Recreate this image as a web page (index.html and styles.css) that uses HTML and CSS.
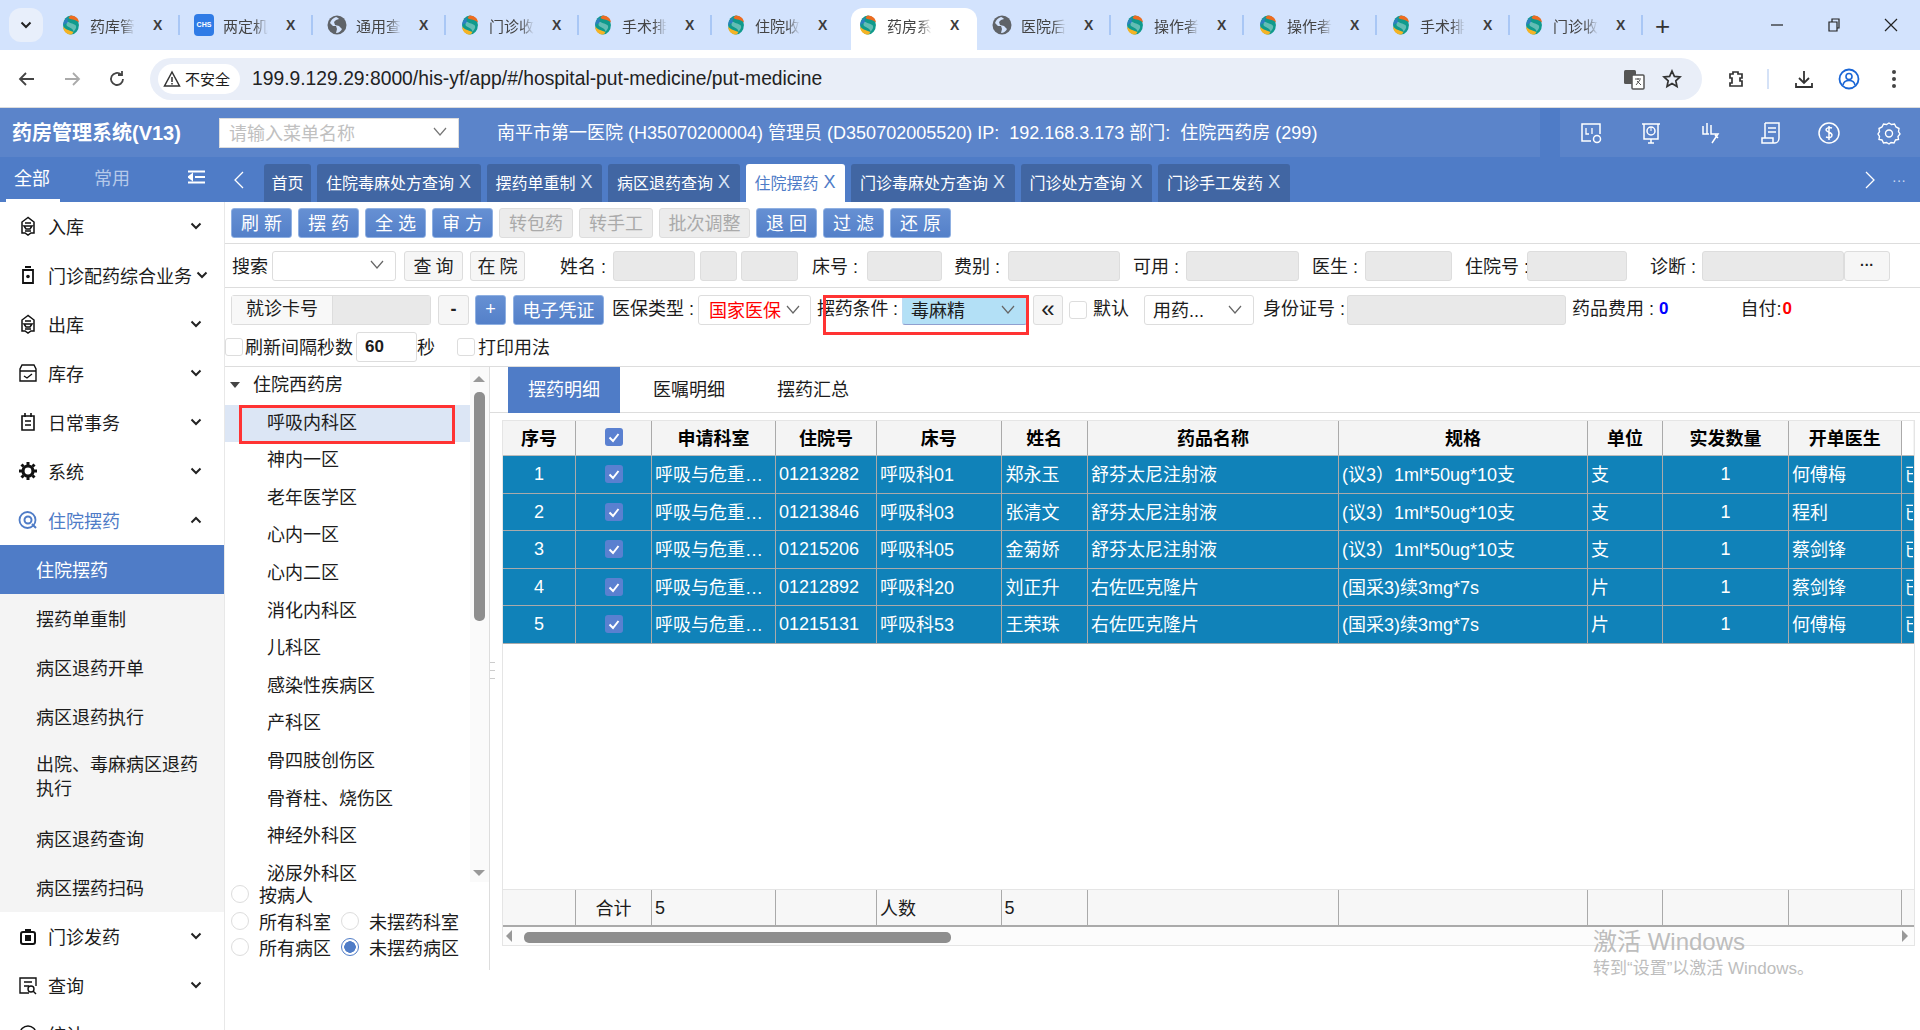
FILE: index.html
```html
<!DOCTYPE html>
<html lang="zh-CN">
<head>
<meta charset="utf-8">
<title>药房管理系统</title>
<link rel="stylesheet" href="styles.css">
</head>
<body>
<svg class="defs" aria-hidden="true">
  <symbol id="fav" viewBox="0 0 20 24">
    <ellipse cx="10" cy="12" rx="9.5" ry="11.5" fill="#0f9a8c"/>
    <path d="M10 .5C15 .5 19.5 4 19.5 9 16 5 11 6 7 3.5 8 1.5 9 .5 10 .5Z" fill="#ee6b1f"/>
    <path d="M.8 14C4 18 9 18 13 20.5 12 22.5 11 23.5 10 23.5 5 23.5.5 19.5.8 14Z" fill="#f5b324"/>
    <path d="M7 3.5C3 4 .5 8 .6 13 3 10 5 10 7 9 5.5 7 5.5 5 7 3.5Z" fill="#2c7fc0"/>
    <path d="M6.500 8C9 10 14 10 16 13 17 15 15 18 13 20 13 17 8 15 5 13 4 11 5 9 6.500 8Z" fill="#fff" opacity=".35"/>
  </symbol>
  <symbol id="globe" viewBox="0 0 20 20">
    <circle cx="10" cy="10" r="9.500" fill="#5f6368"/>
    <path d="M9 2C6 3 4 5 3 8l3 3 3 0 1 3-1 4c3 0 5-2 6-4l-3-3-4-1-1-3 2-2 3-1C11 3 10 2 9 2Z" fill="#d3e3fd"/>
  </symbol>
  <symbol id="v" viewBox="0 0 14 9"><path d="M1 1l6 7 6-7" fill="none" stroke="currentColor" stroke-width="1.200"/></symbol>
  <symbol id="chev" viewBox="0 0 12 8"><path d="M1.500 1.500 6 6l4.500-4.500" fill="none" stroke="currentColor" stroke-width="2"/></symbol>
  <symbol id="check" viewBox="0 0 18 18"><rect width="18" height="18" rx="3" fill="#5a80d0"/><path d="M4.500 9.500 8 13l5.500-7" fill="none" stroke="#fff" stroke-width="2"/></symbol>
  <symbol id="house" viewBox="0 0 20 20"><path d="M10 1.500 4 6v11h3l3 2 3-2h3V6ZM7 7h6M6 10h8l-2 3H8ZM7 15h6" fill="none" stroke="#111" stroke-width="1.500"/></symbol>
</svg>

<header class="chrome">
  <div class="tabstrip">
    <div class="tabmenu"><svg class="ic12"><use href="#chev"/></svg></div>
    <div class="btab"><svg class="favi"><use href="#fav"/></svg><span class="btitle">药库管</span><span class="bx">X</span></div>
    <div class="btab"><span class="chs">CHS</span><span class="btitle">两定机</span><span class="bx">X</span></div>
    <div class="btab"><svg class="favi"><use href="#globe"/></svg><span class="btitle">通用查</span><span class="bx">X</span></div>
    <div class="btab"><svg class="favi"><use href="#fav"/></svg><span class="btitle">门诊收</span><span class="bx">X</span></div>
    <div class="btab"><svg class="favi"><use href="#fav"/></svg><span class="btitle">手术排</span><span class="bx">X</span></div>
    <div class="btab nosep"><svg class="favi"><use href="#fav"/></svg><span class="btitle">住院收</span><span class="bx">X</span></div>
    <div class="btab active nosep"><svg class="favi"><use href="#fav"/></svg><span class="btitle">药房系</span><span class="bx">X</span></div>
    <div class="btab"><svg class="favi"><use href="#globe"/></svg><span class="btitle">医院后</span><span class="bx">X</span></div>
    <div class="btab"><svg class="favi"><use href="#fav"/></svg><span class="btitle">操作者</span><span class="bx">X</span></div>
    <div class="btab"><svg class="favi"><use href="#fav"/></svg><span class="btitle">操作者</span><span class="bx">X</span></div>
    <div class="btab"><svg class="favi"><use href="#fav"/></svg><span class="btitle">手术排</span><span class="bx">X</span></div>
    <div class="btab"><svg class="favi"><use href="#fav"/></svg><span class="btitle">门诊收</span><span class="bx">X</span></div>
    <span class="newtab">+</span>
    <div class="winbtns">
      <svg class="wb" viewBox="0 0 16 16"><path d="M2 8h12" stroke="#222" stroke-width="1.200"/></svg>
      <svg class="wb" viewBox="0 0 16 16"><path d="M3 5h8v9H3ZM6 5V2h7v9h-2" fill="none" stroke="#222" stroke-width="1.200"/></svg>
      <svg class="wb" viewBox="0 0 16 16"><path d="M2 2l12 12M14 2 2 14" stroke="#222" stroke-width="1.200"/></svg>
    </div>
  </div>
  <div class="addrbar">
    <svg class="nav1" viewBox="0 0 20 20"><path d="M17 10H4M9 4l-6 6 6 6" fill="none" stroke="#444" stroke-width="1.800"/></svg>
    <svg class="nav1" viewBox="0 0 20 20"><path d="M3 10h13M11 4l6 6-6 6" fill="none" stroke="#aaa" stroke-width="1.800"/></svg>
    <svg class="nav1" viewBox="0 0 20 20"><path d="M16 10a6 6 0 1 1-2-4.500M15 2v4h-4" fill="none" stroke="#444" stroke-width="1.800"/></svg>
    <div class="omni">
      <div class="secchip">
        <svg class="warn" viewBox="0 0 18 18"><path d="M9 2 1.500 16h15ZM9 7v5M9 13v1.500" fill="none" stroke="#333" stroke-width="1.500"/></svg>
        <span>不安全</span>
      </div>
      <span class="url">199.9.129.29:8000/his-yf/app/#/hospital-put-medicine/put-medicine</span>
      <svg class="omni-i tr" viewBox="0 0 22 22"><rect x="1" y="2" width="12" height="14" rx="1.500" fill="#555"/><rect x="9" y="7" width="12" height="14" rx="1" fill="#fff" stroke="#555" stroke-width="1.500"/><path d="M12 11h6M15 10v2M13 17l4-5M14 13l4 4" stroke="#555"/></svg>
      <svg class="omni-i st" viewBox="0 0 20 20"><path d="M10 2l2.400 5.400 5.600.6-4.200 3.800 1.200 5.700L10 14.600l-5 2.900 1.200-5.700L2 8l5.600-.6Z" fill="none" stroke="#333" stroke-width="1.700"/></svg>
    </div>
    <svg class="tool t-ext" viewBox="0 0 20 20"><path d="M4 5h3V3h5v2h4v4h-2v3h2v5H4v-3h2V9H4Z" fill="none" stroke="#333" stroke-width="1.700"/></svg>
    <span class="toolsep"></span>
    <svg class="tool t-dl" viewBox="0 0 20 20"><path d="M10 2v11M5 9l5 5 5-5M2 14v4h16v-4" fill="none" stroke="#333" stroke-width="1.800"/></svg>
    <svg class="tool t-pr" viewBox="0 0 22 22"><circle cx="11" cy="11" r="9.500" fill="none" stroke="#1a66d6" stroke-width="1.800"/><circle cx="11" cy="8.500" r="3" fill="none" stroke="#1a66d6" stroke-width="1.600"/><path d="M5 17c1-6 11-6 12 0" fill="none" stroke="#1a66d6" stroke-width="1.600"/></svg>
    <svg class="tool t-dots" viewBox="0 0 6 20"><circle cx="3" cy="3" r="2" fill="#444"/><circle cx="3" cy="10" r="2" fill="#444"/><circle cx="3" cy="17" r="2" fill="#444"/></svg>
  </div>
</header>

<div class="hdr">
  <div class="brand">药房管理系统(V13)</div>
  <div class="menusearch"><span>请输入菜单名称</span><svg class="vv"><use href="#v"/></svg></div>
  <div class="info">南平市第一医院 (H35070200004) 管理员 (D350702005520) IP:&nbsp; 192.168.3.173 部门:&nbsp; 住院西药房 (299)</div>
  <div class="notch"></div>
  <div class="hicons">
    <svg class="hi" viewBox="0 0 24 24"><path d="M12 20H3V3h18v10" fill="none" stroke="#fff" stroke-width="1.500"/><circle cx="18" cy="18" r="3.500" fill="none" stroke="#fff" stroke-width="1.500"/><path d="M7 7v6h3M13 7v6" fill="none" stroke="#fff" stroke-width="1.300"/></svg>
    <svg class="hi" viewBox="0 0 24 24"><path d="M3 3h18M5 3v15h14V3M12 18v4M9 22h6" fill="none" stroke="#fff" stroke-width="1.500"/><circle cx="12" cy="10" r="4" fill="none" stroke="#fff" stroke-width="1.500"/><path d="M12 10V6" stroke="#fff"/></svg>
    <svg class="hi" viewBox="0 0 24 24"><path d="M5 5v8h6M9 2v11M13 4v9h7l-6 9M17 14l3 3" fill="none" stroke="#fff" stroke-width="1.500"/></svg>
    <svg class="hi" viewBox="0 0 24 24"><path d="M7 2h14v15c0 3-2 5-4 5H4v-5h11v5M7 17V2M10 7h8M10 11h8" fill="none" stroke="#fff" stroke-width="1.500"/></svg>
    <svg class="hi" viewBox="0 0 24 24"><circle cx="12" cy="12" r="10" fill="none" stroke="#fff" stroke-width="1.500"/><path d="M15 7c-3-1-6 0-6 2s6 2 6 5-3 3-6 2M12 5v14" fill="none" stroke="#fff" stroke-width="1.500"/></svg>
    <svg class="hi" viewBox="0 0 24 24"><path d="M12 2l2.500 1.500 3-.5 1.500 3 3 1.500-.5 3L23 13l-2 2.500.5 3-3 .5-1.500 3-3-.5L12 23l-2.500-1.500-3 .5L5 19l-3-.5.5-3L1 13l1.500-2.500-.5-3L5 6l1.500-3 3 .5Z" fill="none" stroke="#fff" stroke-width="1.400"/><circle cx="12" cy="12.500" r="3.500" fill="none" stroke="#fff" stroke-width="1.400"/></svg>
  </div>
</div>

<div class="navrow">
  <div class="navside">
    <span class="ns-a">全部</span>
    <span class="ns-b">常用</span>
    <svg class="ns-c" viewBox="0 0 18 14"><path d="M0 1.500h17M7 7h10M0 12.500h17M4 4.500 .5 7 4 9.500Z" stroke="#fff" stroke-width="2" fill="#fff"/></svg>
  </div>
  <svg class="pg pg-l" viewBox="0 0 12 20"><path d="M10 2 2 10l8 8" fill="none" stroke="#fff" stroke-width="1.300"/></svg>
  <div class="ptab plain">首页</div>
  <div class="ptab">住院毒麻处方查询<i>X</i></div>
  <div class="ptab">摆药单重制<i>X</i></div>
  <div class="ptab">病区退药查询<i>X</i></div>
  <div class="ptab on">住院摆药<i>X</i></div>
  <div class="ptab">门诊毒麻处方查询<i>X</i></div>
  <div class="ptab">门诊处方查询<i>X</i></div>
  <div class="ptab">门诊手工发药<i>X</i></div>
  <svg class="pg pg-r" viewBox="0 0 12 20"><path d="M2 2l8 8-8 8" fill="none" stroke="#fff" stroke-width="1.300"/></svg>
  <span class="pgmore">···</span>
</div>

<div class="main">
  <aside class="side">
    <div class="mi"><svg class="mico"><use href="#house"/></svg><span>入库</span><svg class="chv"><use href="#chev"/></svg></div>
    <div class="mi"><svg class="mico" viewBox="0 0 20 20"><path d="M7 2h6M5 5h10v13H5Z" fill="none" stroke="#111" stroke-width="1.800"/><circle cx="10" cy="11.500" r="1.800" fill="#111"/></svg><span class="long">门诊配药综合业务</span><svg class="chv"><use href="#chev"/></svg></div>
    <div class="mi"><svg class="mico"><use href="#house"/></svg><span>出库</span><svg class="chv"><use href="#chev"/></svg></div>
    <div class="mi"><svg class="mico" viewBox="0 0 20 20"><path d="M4 2h12l2 4v12H2V6ZM2 8h16M6 13l3 2 5-4" fill="none" stroke="#111" stroke-width="1.400"/></svg><span>库存</span><svg class="chv"><use href="#chev"/></svg></div>
    <div class="mi"><svg class="mico" viewBox="0 0 20 20"><path d="M4 4h12v14H4ZM7 1v4M13 1v4M7 9h6M7 13h6" fill="none" stroke="#111" stroke-width="1.600"/></svg><span>日常事务</span><svg class="chv"><use href="#chev"/></svg></div>
    <div class="mi"><svg class="mico" viewBox="0 0 20 20"><circle cx="10" cy="10" r="5" fill="none" stroke="#111" stroke-width="3.200"/><path d="M10 1v3M10 16v3M1 10h3M16 10h3M3.500 3.500l2 2M14.500 14.500l2 2M16.500 3.500l-2 2M5.500 14.500l-2 2" stroke="#111" stroke-width="3"/></svg><span>系统</span><svg class="chv"><use href="#chev"/></svg></div>
    <div class="mi cur"><svg class="mico" viewBox="0 0 20 20"><circle cx="9.500" cy="10" r="8" fill="none" stroke="#4f7cc7" stroke-width="1.800"/><circle cx="10" cy="10" r="3.500" fill="none" stroke="#4f7cc7" stroke-width="2"/><path d="M14 14l4 4" stroke="#4f7cc7" stroke-width="2"/></svg><span>住院摆药</span><svg class="chv up"><use href="#chev"/></svg></div>
    <div class="sub">
      <div class="si act">住院摆药</div>
      <div class="si">摆药单重制</div>
      <div class="si">病区退药开单</div>
      <div class="si">病区退药执行</div>
      <div class="si multi">出院、毒麻病区退药执行</div>
      <div class="si">病区退药查询</div>
      <div class="si">病区摆药扫码</div>
    </div>
    <div class="mi"><svg class="mico" viewBox="0 0 20 20"><rect x="3" y="6" width="14" height="12" rx="2" fill="none" stroke="#111" stroke-width="2"/><path d="M7 3h6v3H7Z" fill="#111"/><rect x="7" y="9" width="6" height="6" fill="#111"/></svg><span>门诊发药</span><svg class="chv"><use href="#chev"/></svg></div>
    <div class="mi"><svg class="mico" viewBox="0 0 20 20"><path d="M18 11V3H2v15h9M6 7h8M6 11h5" fill="none" stroke="#111" stroke-width="1.400"/><circle cx="13" cy="14" r="3" fill="none" stroke="#111" stroke-width="1.400"/><path d="M15 16l3 3" stroke="#111" stroke-width="1.400"/></svg><span>查询</span><svg class="chv"><use href="#chev"/></svg></div>
    <div class="mi"><svg class="mico" viewBox="0 0 20 20"><circle cx="10" cy="10" r="8" fill="none" stroke="#111" stroke-width="1.500"/></svg><span>统计</span><svg class="chv"><use href="#chev"/></svg></div>
  </aside>

  <section class="content">
    <div class="actions">
      <button class="btn pri b2">刷新</button>
      <button class="btn pri b2">摆药</button>
      <button class="btn pri b2">全选</button>
      <button class="btn pri b2">审方</button>
      <button class="btn dis b3">转包药</button>
      <button class="btn dis b3">转手工</button>
      <button class="btn dis b4">批次调整</button>
      <button class="btn pri b2">退回</button>
      <button class="btn pri b2">过滤</button>
      <button class="btn pri b2">还原</button>
    </div>

    <div class="frow f1">
      <label class="lb w40">搜索</label>
      <div class="sel w124"><svg class="vv"><use href="#v"/></svg></div>
      <button class="btn plainb w59 ml8 sp">查询</button>
      <button class="btn plainb w55 ml7 sp">在院</button>
      <label class="lb w53 ml35">姓名 :</label>
      <div class="inp w82"></div>
      <div class="inp w37 ml5"></div>
      <div class="inp w57 ml4"></div>
      <label class="lb w55 ml14">床号 :</label>
      <div class="inp w75"></div>
      <label class="lb w54 ml12">费别 :</label>
      <div class="inp w112"></div>
      <label class="lb w53 ml13">可用 :</label>
      <div class="inp w113"></div>
      <label class="lb w53 ml13">医生 :</label>
      <div class="inp w87"></div>
      <label class="lb w62 ml13">住院号 :</label>
      <div class="inp w100"></div>
      <label class="lb w52 ml23">诊断 :</label>
      <div class="inp w142"></div>
      <button class="btn plainb w46 dots">···</button>
    </div>

    <div class="frow f2">
      <div class="cardgrp"><span class="cardlb">就诊卡号</span><span class="cardin"></span></div>
      <button class="btn light w31 ml7">-</button>
      <button class="btn pri w31 ml6">+</button>
      <button class="btn pri w91 ml7">电子凭证</button>
      <label class="lb w86 ml8">医保类型 :</label>
      <div class="sel w113 red">国家医保<svg class="vv"><use href="#v"/></svg></div>
      <label class="lb w85 ml6 tight">摆药条件 :</label>
      <div class="sel w125 hi-sel">毒麻精<svg class="vv"><use href="#v"/></svg></div>
      <button class="btn plainb w30 ml6 dbl">«</button>
      <span class="cb ml6"></span>
      <label class="lb w51 ml6">默认</label>
      <div class="sel w110 tight-sel">用药...<svg class="vv"><use href="#v"/></svg></div>
      <label class="lb w84 ml9">身份证号 :</label>
      <div class="inp w219"></div>
      <label class="lb w87 ml6">药品费用 :</label>
      <b class="num blue">0</b>
      <label class="lb ml72">自付:</label><b class="num redt">0</b>
      <div class="redbox rb-cond"></div>
    </div>

    <div class="frow f3">
      <span class="cb"></span>
      <label class="lb w111 ml2">刷新间隔秒数</label>
      <div class="numin">60</div>
      <label class="lb w40">秒</label>
      <span class="cb cb2"></span>
      <label class="lb ml3">打印用法</label>
    </div>

    <div class="panes">
      <div class="treepane">
        <div class="treewrap">
          <div class="tree">
            <div class="ti top"><span class="tri"></span>住院西药房</div>
            <div class="ti chosen">呼吸内科区<div class="redbox rb-ward"></div></div>
            <div class="ti">神内一区</div>
            <div class="ti">老年医学区</div>
            <div class="ti">心内一区</div>
            <div class="ti">心内二区</div>
            <div class="ti">消化内科区</div>
            <div class="ti">儿科区</div>
            <div class="ti">感染性疾病区</div>
            <div class="ti">产科区</div>
            <div class="ti">骨四肢创伤区</div>
            <div class="ti">骨脊柱、烧伤区</div>
            <div class="ti">神经外科区</div>
            <div class="ti">泌尿外科区</div>
          </div>
          <div class="vbar">
            <span class="ar-up"></span>
            <span class="vthumb"></span>
            <span class="ar-dn"></span>
          </div>
        </div>
        <div class="radios">
          <div class="rrow"><span class="rd"></span><span class="rt">按病人</span></div>
          <div class="rrow"><span class="rd"></span><span class="rt">所有科室</span><span class="rd"></span><span class="rt">未摆药科室</span></div>
          <div class="rrow"><span class="rd"></span><span class="rt">所有病区</span><span class="rd on"></span><span class="rt">未摆药病区</span></div>
        </div>
      </div>
      <div class="rightpane">
        <div class="grip"></div>
        <div class="rtabs">
          <div class="rtab on">摆药明细</div>
          <div class="rtab t2">医嘱明细</div>
          <div class="rtab t3">摆药汇总</div>
        </div>
        <div class="grid">
          <div class="row head">
            <div class="c ctr">序号</div><div class="c ctr"><svg class="ck"><use href="#check"/></svg></div><div class="c ctr">申请科室</div><div class="c ctr">住院号</div><div class="c ctr">床号</div><div class="c ctr">姓名</div><div class="c ctr">药品名称</div><div class="c ctr">规格</div><div class="c ctr">单位</div><div class="c ctr">实发数量</div><div class="c ctr">开单医生</div><div class="c"></div>
          </div>
          <div class="gbody">
            <div class="row rec">
              <div class="c ctr">1</div><div class="c ctr"><svg class="ck"><use href="#check"/></svg></div><div class="c">呼吸与危重…</div><div class="c">01213282</div><div class="c">呼吸科01</div><div class="c">郑永玉</div><div class="c">舒芬太尼注射液</div><div class="c">(议3）1ml*50ug*10支</div><div class="c">支</div><div class="c ctr">1</div><div class="c">何傅梅</div><div class="c">已</div>
            </div>
            <div class="row rec">
              <div class="c ctr">2</div><div class="c ctr"><svg class="ck"><use href="#check"/></svg></div><div class="c">呼吸与危重…</div><div class="c">01213846</div><div class="c">呼吸科03</div><div class="c">张清文</div><div class="c">舒芬太尼注射液</div><div class="c">(议3）1ml*50ug*10支</div><div class="c">支</div><div class="c ctr">1</div><div class="c">程利</div><div class="c">已</div>
            </div>
            <div class="row rec">
              <div class="c ctr">3</div><div class="c ctr"><svg class="ck"><use href="#check"/></svg></div><div class="c">呼吸与危重…</div><div class="c">01215206</div><div class="c">呼吸科05</div><div class="c">金菊娇</div><div class="c">舒芬太尼注射液</div><div class="c">(议3）1ml*50ug*10支</div><div class="c">支</div><div class="c ctr">1</div><div class="c">蔡剑锋</div><div class="c">已</div>
            </div>
            <div class="row rec">
              <div class="c ctr">4</div><div class="c ctr"><svg class="ck"><use href="#check"/></svg></div><div class="c">呼吸与危重…</div><div class="c">01212892</div><div class="c">呼吸科20</div><div class="c">刘正升</div><div class="c">右佐匹克隆片</div><div class="c">(国采3)续3mg*7s</div><div class="c">片</div><div class="c ctr">1</div><div class="c">蔡剑锋</div><div class="c">已</div>
            </div>
            <div class="row rec">
              <div class="c ctr">5</div><div class="c ctr"><svg class="ck"><use href="#check"/></svg></div><div class="c">呼吸与危重…</div><div class="c">01215131</div><div class="c">呼吸科53</div><div class="c">王荣珠</div><div class="c">右佐匹克隆片</div><div class="c">(国采3)续3mg*7s</div><div class="c">片</div><div class="c ctr">1</div><div class="c">何傅梅</div><div class="c">已</div>
            </div>
          </div>
          <div class="row foot">
            <div class="c"></div><div class="c ctr">合计</div><div class="c fnum">5</div><div class="c"></div><div class="c">人数</div><div class="c fnum">5</div><div class="c"></div><div class="c"></div><div class="c"></div><div class="c"></div><div class="c"></div><div class="c"></div>
          </div>
          <div class="hbar"><span class="ar-l"></span><span class="hthumb"></span><span class="ar-r"></span></div>
        </div>
      </div>
    </div>
    <div class="winmark">
      <div class="wm1">激活 Windows</div>
      <div class="wm2">转到“设置”以激活 Windows。</div>
    </div>
  </section>
</div>
</body>
</html>
```
FILE: styles.css
```css
* { box-sizing: border-box; }
html, body { margin: 0; height: 1030px; overflow: hidden; background: #fff; }
body { font-family: "Liberation Sans", "Noto Sans CJK SC", sans-serif; font-size: 18px; color: #1c1c1c; }
.defs { position: absolute; width: 0; height: 0; }
svg { display: block; flex: none; }

/* browser chrome */
.chrome { height: 108px; border-bottom: 1px solid #dcdcdc; }
.tabstrip { height: 50px; background: #d3e3fd; display: flex; align-items: flex-end; position: relative; }
.tabmenu { width: 34px; height: 34px; margin: 0 4px 8px 9px; border-radius: 12px; background: #e8effb; display: flex; align-items: center; justify-content: center; color: #222; }
.ic12 { width: 12px; height: 8px; }
.btab { width: 133px; height: 42px; display: flex; align-items: center; padding: 0 0 8px 14px; position: relative; font-size: 15px; color: #444; flex: none; }
.btab::after { content: ""; position: absolute; right: 0; top: 7px; height: 20px; width: 2px; background: #a9c7f5; }
.btab.nosep::after { display: none; }
.btab.active { background: #fff; border-radius: 12px 12px 0 0; margin: 0 1px 0 6px; width: 126px; z-index: 1; padding-left: 7px; }
.favi { width: 20px; height: 20px; margin-right: 9px; }
.chs { width: 20px; height: 22px; margin-right: 9px; background: #2f7be6; border-radius: 4px; color: #fff; font-size: 7px; font-weight: bold; line-height: 22px; text-align: center; flex: none; }
.btitle { width: 45px; overflow: hidden; white-space: nowrap; -webkit-mask-image: linear-gradient(90deg, #000 70%, transparent); mask-image: linear-gradient(90deg, #000 70%, transparent); }
.bx { margin-left: 18px; font-size: 14px; font-weight: bold; color: #3c3c3c; }
.newtab { margin: 0 0 9px 12px; font-size: 26px; line-height: 30px; color: #333; }
.winbtns { margin-left: auto; display: flex; gap: 41px; padding: 0 21px 17px 0; }
.wb { width: 16px; height: 16px; }

.addrbar { height: 57px; display: flex; align-items: center; padding-left: 17px; background: #fff; }
.nav1 { width: 20px; height: 20px; margin-right: 25px; }
.omni { width: 1552px; height: 42px; margin-left: -2px; border-radius: 21px; background: #e9eef8; display: flex; align-items: center; padding-left: 8px; }
.secchip { height: 30px; width: 82px; border-radius: 15px; background: #fff; display: flex; align-items: center; padding-left: 5px; gap: 4px; font-size: 15px; }
.warn { width: 18px; height: 18px; }
.url { margin-left: 12px; padding-top: 1px; font-size: 19.300px; color: #222; white-space: nowrap; }
.omni-i { margin-left: auto; }
.tr { width: 22px; height: 22px; margin-right: 17px; margin-left: auto; }
.st { width: 20px; height: 20px; margin: 0 20px 0 0; }
.tool { width: 20px; height: 20px; }
.t-ext { margin-left: 24px; }
.toolsep { width: 2px; height: 20px; background: #d5e2f7; margin-left: 21px; }
.t-dl { margin-left: 25px; }
.t-pr { margin-left: 24px; width: 22px; height: 22px; }
.t-dots { margin-left: 31px; width: 6px; }

/* app header */
.hdr { height: 49px; background: #5b84ca; display: flex; align-items: center; color: #fff; }
.brand { width: 219px; padding: 0 0 2px 12px; font-size: 20px; font-weight: bold; white-space: nowrap; }
.menusearch { width: 240px; height: 30px; background: #fff; border: 1px solid #ddd; display: flex; align-items: center; justify-content: space-between; padding: 0 11px 2px 9px; color: #c0c0c0; }
.menusearch .vv { color: #777; }
.vv { width: 14px; height: 9px; color: #666; margin-left: auto; }
.info { margin-left: 38px; padding-bottom: 3px; white-space: nowrap; width: 1043px; }
.notch { width: 20px; height: 49px; background: #4f7cc7; }
.hicons { flex: 1; display: flex; gap: 35.500px; padding-left: 19px; }
.hi { width: 24px; height: 24px; }

.navrow { height: 45px; background: #4f7cc7; display: flex; align-items: flex-end; gap: 6px; position: relative; }
.navside { width: 226px; height: 45px; flex: none; display: flex; align-items: center; padding: 0 0 5px 14px; position: relative; color: #fff; margin-right: -6px; }
.navside::after { content: ""; position: absolute; left: 6px; bottom: 0; width: 54px; height: 3px; background: #fff; }
.ns-b { margin-left: 44px; color: #b5c9ea; }
.ns-c { width: 18px; height: 14px; margin-left: auto; margin-right: 20px; }
.pg { width: 12px; height: 20px; align-self: center; }
.pg-l { margin-left: 7px; margin-right: 0; }
.pg-r { margin-left: auto; }
.pgmore { align-self: center; color: #c9d8f0; font-size: 14px; margin: 0 14px 0 10px; }
.ptab { height: 38px; padding: 0 9px 2px; background: #4166a3; border-radius: 3px 3px 0 0; color: #fff; font-size: 16px; display: flex; align-items: center; gap: 5px; white-space: nowrap; }
.pg-l + .ptab { margin-left: 13px; }
.ptab.plain { padding: 0 7.500px 2px; }
.ptab i { font-style: normal; font-size: 18px; color: #d9e4f5; width: 12.500px; }
.ptab.on { background: #fff; color: #4f7cc7; }
.ptab.on i { color: #4f7cc7; }

/* sidebar */
.main { display: flex; height: 828px; }
.side { width: 225px; flex: none; border-right: 1px solid #e8e8e8; overflow: hidden; }
.mi { height: 49px; display: flex; align-items: center; padding: 0 0 2px 18px; }
.mico { width: 20px; height: 20px; margin-right: 10px; }
.mi .chv { width: 12px; height: 8px; margin-left: auto; margin-right: 22px; color: #222; }
.chv.up { transform: rotate(180deg); }
.long { white-space: nowrap; width: 144px; }
.mi .long + .chv { margin-right: 22px; margin-left: 4px; }
.mi.cur { color: #4f7cc7; }
.sub { background: #f4f4f4; }
.si { height: 49px; padding: 0 10px 2px 36px; display: flex; align-items: center; }
.si.act { background: #4f7cc7; color: #fff; }
.si.multi { height: 73px; line-height: 24px; }

/* content */
.content { flex: 1; min-width: 0; position: relative; }
.actions { height: 42px; padding: 6px 0 0 6px; display: flex; gap: 6px; border-bottom: 1px solid #ddd; }
.btn { height: 30px; border-radius: 3px; font: inherit; padding: 0 0 2px; display: flex; align-items: center; justify-content: center; flex: none; }
.btn.pri { background: linear-gradient(#6690d3, #5480c9); border: 1px solid #8fb0e2; color: #fff; }
.btn.dis { background: #ececec; border: 1px solid #ddd; color: #aaa; }
.btn.plainb { background: #f6f6f6; border: 1px solid #ddd; color: #222; }
.btn.light { background: #f6f6f6; border: 1px solid #ddd; color: #222; font-weight: bold; }
.b2 { width: 61px; letter-spacing: 5px; text-indent: 5px; }
.b3 { width: 74px; }
.b4 { width: 91px; }
.sp { letter-spacing: 4px; text-indent: 4px; }
.dots { color: #444; font-weight: bold; font-size: 14px; }
.dbl { font-size: 24px; font-weight: normal; }

.frow { display: flex; align-items: center; position: relative; }
.f1 { height: 44px; padding-left: 7px; border-bottom: 1px solid #ddd; }
.f1 .lb { padding-bottom: 2px; }
.f2 { height: 41px; padding: 7px 0 0 6px; align-items: flex-start; }
.f2 .lb, .f2 .num { line-height: 28px; }
.f3 { height: 38px; padding-bottom: 2px; border-bottom: 1px solid #ddd; }
.f3 .lb { padding-bottom: 2px; }
.lb { flex: none; white-space: nowrap; }
.tight { letter-spacing: -.2px; }
.inp { height: 30px; background: #e9e9e9; border: 1px solid #ddd; border-radius: 3px; flex: none; }
.sel { height: 30px; background: #fff; border: 1px solid #ddd; border-radius: 3px; display: flex; align-items: center; padding: 0 11px 2px 10px; flex: none; }
.sel.red { color: #f00; padding-right: 10px; }
.tight-sel { padding-left: 8px; }
.hi-sel { background: #b3e0f6; border-color: #bcdcf5; border-bottom-color: #8f9fcf; padding-left: 8px; }
.cardgrp { width: 200px; height: 30px; display: flex; border: 1px solid #ddd; border-radius: 3px; flex: none; }
.cardlb { width: 101px; background: #f8f8f8; text-align: center; line-height: 26px; border-right: 1px solid #ddd; }
.cardin { flex: 1; background: #e9e9e9; }
.cb { width: 18px; height: 18px; border: 1px solid #ddd; border-radius: 3px; flex: none; background: #fff; }
.f2 .cb { margin-top: 6px; }
.cb2 { margin-left: 0; }
.numin { width: 61px; height: 30px; border: 1px solid #ddd; border-radius: 3px; padding-left: 8px; line-height: 27px; font-weight: bold; font-size: 17px; }
.num { font-size: 17px; }
.blue { color: #00f; }
.redt { color: #f00; margin-left: 1px; }
.redbox { position: absolute; border: 3px solid #f33; pointer-events: none; }
.rb-cond { left: 598px; top: 7px; width: 206px; height: 40px; }
.rb-ward { left: 14px; top: 0; width: 216px; height: 39px; }

.w30{width:30px}.w31{width:31px}.w37{width:37px}.w40{width:40px}.w46{width:46px}.w51{width:51px}.w52{width:52px}.w53{width:53px}.w54{width:54px}.w55{width:55px}.w57{width:57px}.w59{width:59px}.w62{width:62px}.w75{width:75px}.w82{width:82px}.w84{width:84px}.w85{width:85px}.w86{width:86px}.w87{width:87px}.w91{width:91px}.w100{width:100px}.w110{width:110px}.w111{width:111px}.w112{width:112px}.w113{width:113px}.w124{width:124px}.w125{width:125px}.w142{width:142px}.w219{width:219px}
.ml2{margin-left:2px}.ml3{margin-left:3px}.ml4{margin-left:4px}.ml5{margin-left:5px}.ml6{margin-left:6px}.ml7{margin-left:7px}.ml8{margin-left:8px}.ml9{margin-left:9px}.ml12{margin-left:12px}.ml13{margin-left:13px}.ml14{margin-left:14px}.ml23{margin-left:23px}.ml35{margin-left:35px}.ml72{margin-left:72px}

/* panes */
.panes { display: flex; height: 603px; }
.treepane { width: 265px; flex: none; border-right: 1px solid #ddd; display: flex; flex-direction: column; }
.treewrap { height: 515px; display: flex; flex: none; }
.tree { width: 245px; flex: none; }
.ti { height: 37.600px; line-height: 37.600px; padding-left: 42px; position: relative; white-space: nowrap; }
.ti.top { padding-left: 28px; }
.tri { display: inline-block; width: 0; height: 0; border: 5px solid transparent; border-top: 6px solid #444; border-bottom: 0; margin: 0 13px 3px -23px; vertical-align: middle; }
.ti.chosen { background: #dce6f5; }
.vbar { width: 19px; background: #fafafa; position: relative; padding: 25px 4px 0; }
.vthumb { display: block; width: 11px; height: 229px; border-radius: 5px; background: #8e8e8e; }
.ar-up, .ar-dn, .ar-l, .ar-r { position: absolute; width: 0; height: 0; border: 6px solid transparent; }
.ar-up { top: 9px; left: 3px; border-bottom: 6px solid #999; border-top: 0; }
.ar-dn { bottom: 6px; left: 3px; border-top: 6px solid #999; border-bottom: 0; }
.radios { margin-top: -1px; }
.rrow { height: 26.500px; display: flex; align-items: center; padding-left: 6px; }
.rd { width: 18px; height: 18px; border-radius: 50%; border: 1px solid #ddd; flex: none; }
.rd.on { border: 1px solid #4f7cc7; background: radial-gradient(circle, #4f7cc7 0 5.500px, #fff 6px); }
.rt { margin: 0 10px; white-space: nowrap; width: 72px; }
.rt:last-child { width: auto; margin-right: 0; }
.rightpane { flex: 1; min-width: 0; padding: 0 5px 0 12px; position: relative; }
.grip { position: absolute; left: 0; top: 295px; width: 5px; height: 17px; border-top: 1px solid #ccc; border-bottom: 1px solid #ccc; background: linear-gradient(#fff 45%, #ccc 45% 55%, #fff 55%); }
.rtabs { height: 46px; margin: 0 -5px 7px -12px; padding-left: 18px; display: flex; border-bottom: 1px solid #ddd; }
.rtab { height: 46px; line-height: 46px; flex: none; white-space: nowrap; }
.rtab.on { width: 112px; text-align: center; background: #4f7cc7; color: #fff; }
.t2 { margin-left: 33px; }
.t3 { margin-left: 52px; }

.grid { height: 526px; border: 1px solid #e5e5e5; display: flex; flex-direction: column; }
.row { display: grid; grid-template-columns: 73px 76px 124px 101px 124.500px 86.500px 251px 249px 75px 126px 112.500px 11.500px; flex: none; }
.c { overflow: hidden; white-space: nowrap; padding-left: 3px; display: flex; align-items: center; border-right: 1px solid #aaa; min-width: 0; }
.ctr { justify-content: center; padding-left: 0; }
.head { height: 35px; background: #f4f4f4; border-bottom: 1px solid #bbb; font-weight: bold; color: #000; }
.head .c { padding-bottom: 2px; }
.head .c:last-child { border-right: 0; background: #fff; }
.gbody { flex: 1; min-height: 0; }
.rec { height: 37.500px; background: #1082b9; color: #fff; border-bottom: 1px solid #aaa; }
.rec .c { padding-bottom: 2px; }
.rec .c:nth-child(1), .rec .c:nth-child(4), .rec .c:nth-child(10) { padding-bottom: 0; padding-top: 1px; }
.rec .c:nth-child(2) { padding-bottom: 0; }
.rec .c:last-child { border-right: 0; }
.rec .c:nth-child(6) { padding-left: 4px; }
.ck { width: 18px; height: 18px; }
.foot { height: 38px; background: #f7f7f7; border-top: 1px solid #e5e5e5; border-bottom: 2px solid #aaa; }
.foot .c { padding-bottom: 1px; }
.foot .fnum { padding-bottom: 0; padding-top: 2px; }
.foot .c:last-child { border-right: 0; }
.hbar { height: 18px; background: #fcfcfc; position: relative; }
.hthumb { position: absolute; left: 21px; top: 5px; width: 427px; height: 11px; border-radius: 5px; background: #8e8e8e; }
.ar-l { left: 3px; top: 3px; border-right: 6px solid #999; border-left: 0; }
.ar-r { right: 6px; top: 3px; border-left: 6px solid #999; border-right: 0; }

.winmark { position: absolute; left: 1368px; top: 725px; color: #bdbdbd; white-space: nowrap; pointer-events: none; }
.wm1 { font-size: 24px; line-height: 30px; }
.wm2 { font-size: 17px; line-height: 24px; }
```
